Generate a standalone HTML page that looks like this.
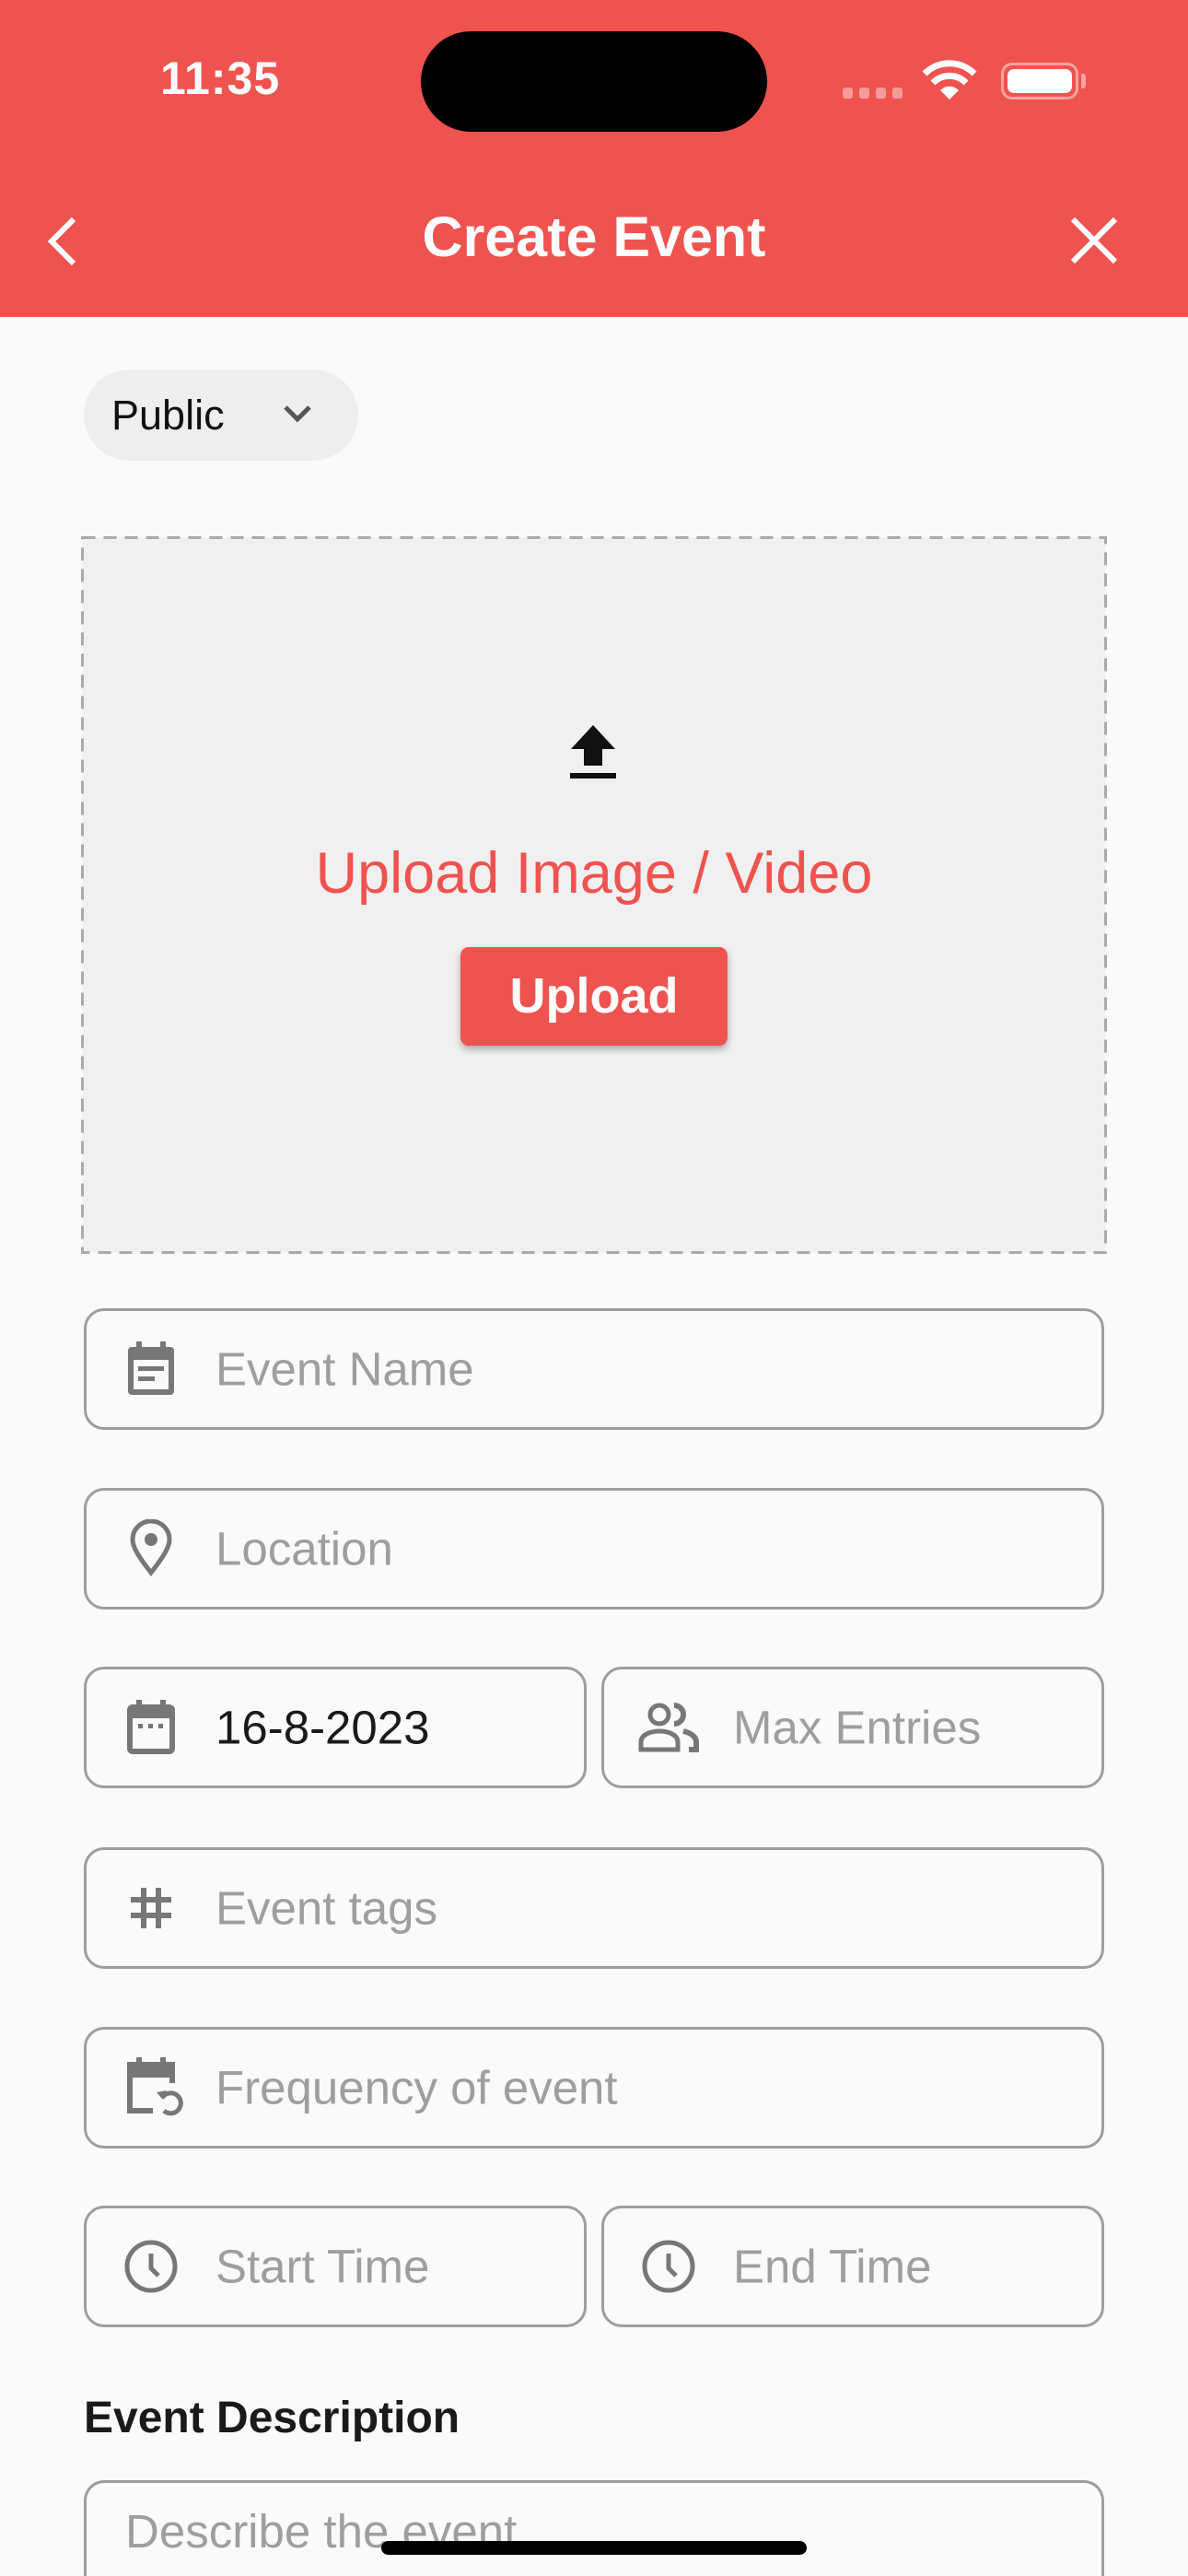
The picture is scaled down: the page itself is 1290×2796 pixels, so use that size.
<!DOCTYPE html>
<html style="width:1290px;height:2796px;overflow:hidden"><head><meta charset="utf-8"><style>
*{margin:0;padding:0;box-sizing:border-box}
body{width:1290px;height:2796px;background:#fafafa;font-family:"Liberation Sans",sans-serif;position:relative;overflow:hidden}
.abs{position:absolute}
.hdr{left:0;top:0;width:1290px;height:344px;background:#ef5350}
.field{position:absolute;border:3px solid #9e9e9e;border-radius:22px;height:132px}
.ph{position:absolute;top:50%;transform:translateY(-50%);font-size:51px;color:#9e9e9e;white-space:nowrap}
.ic{position:absolute;top:50%;transform:translateY(-50%)}
</style></head><body>
<div class="abs hdr"></div>
<div class="abs" style="left:174px;top:56px;font-size:50px;color:#fff;font-weight:bold;letter-spacing:1px">11:35</div>
<div class="abs" style="left:457px;top:34px;width:376px;height:109px;border-radius:55px;background:#000"></div>
<div class="abs" style="left:915px;top:95px;display:flex;gap:7px">
<div style="width:11px;height:12px;border-radius:3px;background:#f59b98"></div><div style="width:11px;height:12px;border-radius:3px;background:#f59b98"></div><div style="width:11px;height:12px;border-radius:3px;background:#f59b98"></div><div style="width:11px;height:12px;border-radius:3px;background:#f59b98"></div></div>
<svg class="abs" style="left:1000px;top:64px" width="62" height="46" viewBox="0 0 62 46"><path d="M4 16 A38 38 0 0 1 58 16" stroke="#fff" stroke-width="7" fill="none"/><path d="M13 26 A25 25 0 0 1 49 26" stroke="#fff" stroke-width="7" fill="none"/><path d="M31 44 L21 34 A14 14 0 0 1 41 34 Z" fill="#fff"/></svg>
<div class="abs" style="left:1087px;top:68px;width:84px;height:40px;border:3px solid #f8a3a0;border-radius:12px;padding:4px"><div style="width:100%;height:100%;background:#fff;border-radius:7px"></div></div>
<div class="abs" style="left:1174px;top:80px;width:5px;height:16px;background:#f8a3a0;border-radius:0 3px 3px 0"></div>
<svg class="abs" style="left:44px;top:232px" width="44" height="60" viewBox="0 0 44 60"><path d="M36 6 L12 30 L36 54" stroke="#fff" stroke-width="6" fill="none"/></svg>
<div class="abs" style="left:0;width:1290px;top:222px;text-align:center;font-size:61px;color:#fff;font-weight:bold">Create Event</div>
<svg class="abs" style="left:1160px;top:233px" width="56" height="56" viewBox="0 0 56 56"><path d="M5 5L51 51M51 5L5 51" stroke="#fff" stroke-width="6"/></svg>
<div class="abs" style="left:91px;top:401px;width:298px;height:99px;border-radius:50px;background:#eeeeee"></div>
<div class="abs" style="left:121px;top:425px;font-size:45px;color:#111">Public</div>
<svg class="abs" style="left:305px;top:436px" width="36" height="28" viewBox="0 0 36 28"><path d="M5 6L18 19L31 6" stroke="#555" stroke-width="5" fill="none"/></svg>
<svg class="abs" style="left:88px;top:582px" width="1114" height="779"><rect x="1.5" y="1.5" width="1111" height="776" fill="#f0f0f0" stroke="#aaa" stroke-width="3" stroke-dasharray="14 9"/></svg>
<svg class="abs" style="left:616px;top:785px" width="56" height="64" viewBox="0 0 56 64"><path d="M28 2 L52 28 H38 V46 H18 V28 H4 Z" fill="#111"/><rect x="3" y="54" width="50" height="6" fill="#111"/></svg>
<div class="abs" style="left:0;width:1290px;top:912px;text-align:center;font-size:63px;color:#ef5350">Upload Image / Video</div>
<div class="abs" style="left:500px;top:1028px;width:290px;height:107px;background:#ef5350;border-radius:9px;box-shadow:0 4px 8px rgba(0,0,0,.3);color:#fff;font-size:54px;font-weight:bold;text-align:center;line-height:107px">Upload</div>

<div class="field" style="left:91px;top:1420px;width:1108px">
<svg class="ic" style="left:42px" width="56" height="64" viewBox="0 0 56 64"><rect x="3" y="8" width="50" height="52" rx="4" fill="#777"/><rect x="12" y="2" width="6" height="10" fill="#777"/><rect x="38" y="2" width="6" height="10" fill="#777"/><rect x="9" y="22" width="38" height="32" fill="#fafafa"/><rect x="14" y="29" width="28" height="5" fill="#777"/><rect x="14" y="40" width="18" height="5" fill="#777"/></svg>
<div class="ph" style="left:140px">Event Name</div></div>

<div class="field" style="left:91px;top:1615px;width:1108px">
<svg class="ic" style="left:46px" width="48" height="64" viewBox="0 0 48 64"><path d="M24 58 C10 40 4 30 4 22 A20 20 0 0 1 44 22 C44 30 38 40 24 58Z" stroke="#777" stroke-width="5" fill="none"/><circle cx="24" cy="22" r="7" fill="#777"/></svg>
<div class="ph" style="left:140px">Location</div></div>

<div class="field" style="left:91px;top:1809px;width:546px">
<svg class="ic" style="left:42px" width="56" height="64" viewBox="0 0 56 64"><rect x="5" y="10" width="46" height="48" rx="3" stroke="#777" stroke-width="6" fill="none"/><rect x="5" y="10" width="46" height="12" fill="#777"/><rect x="12" y="2" width="6" height="10" fill="#777"/><rect x="38" y="2" width="6" height="10" fill="#777"/><rect x="14" y="28" width="5" height="5" fill="#777"/><rect x="25" y="28" width="5" height="5" fill="#777"/><rect x="36" y="28" width="5" height="5" fill="#777"/></svg>
<div class="ph" style="left:140px;color:#1a1a1a">16-8-2023</div></div>
<div class="field" style="left:653px;top:1809px;width:546px">
<svg class="ic" style="left:36px" width="68" height="56" viewBox="0 0 68 56"><circle cx="24" cy="14" r="10" stroke="#777" stroke-width="5" fill="none"/><path d="M4 52 V44 C4 36 14 32 24 32 C34 32 44 36 44 44 V52 Z" stroke="#777" stroke-width="5" fill="none"/><path d="M40 4 A10 10 0 0 1 40 24" stroke="#777" stroke-width="6" fill="none"/><path d="M50 32 C58 34 64 38 64 44 V52 H56" stroke="#777" stroke-width="6" fill="none"/></svg>
<div class="ph" style="left:140px">Max Entries</div></div>

<div class="field" style="left:91px;top:2005px;width:1108px">
<svg class="ic" style="left:44px" width="52" height="52" viewBox="0 0 52 52"><path d="M18 4V48M34 4V48M4 17H48M4 34H48" stroke="#777" stroke-width="6"/></svg>
<div class="ph" style="left:140px">Event tags</div></div>

<div class="field" style="left:91px;top:2200px;width:1108px">
<svg class="ic" style="left:42px" width="64" height="70" viewBox="0 0 64 70"><path d="M30 60 H5 V10 H51 V30" stroke="#777" stroke-width="6" fill="none"/><rect x="5" y="10" width="46" height="14" fill="#777"/><rect x="12" y="2" width="6" height="10" fill="#777"/><rect x="38" y="2" width="6" height="10" fill="#777"/><path d="M40 46 A11 11 0 1 1 42 60" stroke="#777" stroke-width="5" fill="none"/><path d="M34 40 L41 48 L45 38Z" fill="#777"/></svg>
<div class="ph" style="left:140px">Frequency of event</div></div>

<div class="field" style="left:91px;top:2394px;width:546px">
<svg class="ic" style="left:40px" width="60" height="60" viewBox="0 0 60 60"><circle cx="30" cy="30" r="26" stroke="#777" stroke-width="5" fill="none"/><path d="M30 16V32L38 40" stroke="#777" stroke-width="5" fill="none"/></svg>
<div class="ph" style="left:140px">Start Time</div></div>
<div class="field" style="left:653px;top:2394px;width:546px">
<svg class="ic" style="left:40px" width="60" height="60" viewBox="0 0 60 60"><circle cx="30" cy="30" r="26" stroke="#777" stroke-width="5" fill="none"/><path d="M30 16V32L38 40" stroke="#777" stroke-width="5" fill="none"/></svg>
<div class="ph" style="left:140px">End Time</div></div>

<div class="abs" style="left:91px;top:2597px;font-size:48px;font-weight:bold;color:#1a1a1a">Event Description</div>
<div class="abs" style="left:91px;top:2692px;width:1108px;height:104px;border:3px solid #9e9e9e;border-bottom:none;border-radius:22px 22px 0 0"></div>
<div class="abs" style="left:136px;top:2718px;font-size:51px;color:#9e9e9e">Describe the event</div>
<div class="abs" style="left:414px;top:2758px;width:462px;height:15px;border-radius:8px;background:#000"></div>
</body></html>
